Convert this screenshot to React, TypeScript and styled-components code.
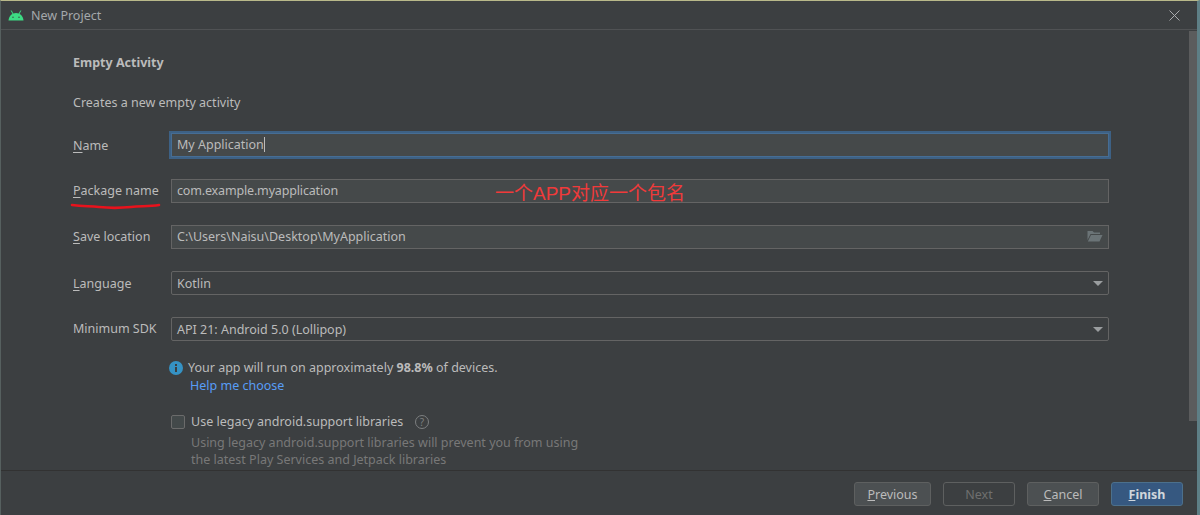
import React from "react";
import styled, { createGlobalStyle } from "styled-components";

const GlobalStyle = createGlobalStyle`
  html, body { margin: 0; padding: 0; background: #3c3f41; }
  body { font-family: "Noto Sans", "Open Sans", sans-serif; font-size: 12.5px; color: #bbbbbb; }
`;

const Window = styled.div`
  position: relative;
  width: 1200px;
  height: 515px;
  box-sizing: border-box;
  display: flex;
  flex-direction: column;
  overflow: hidden;
  background: #3c3f41;
  border-top: 1px solid #b9b98a;
  border-left: 1px solid #56605f;
  border-right: 3px solid #5e7f86;
`;

const TitleBar = styled.div`
  height: 28px;
  flex: none;
  display: flex;
  align-items: center;
  padding: 0 17px 0 7px;
  gap: 7px;
  border-bottom: 1px solid #505254;
  color: #a4a8ab;
  font-size: 12.5px;
`;

const TitleText = styled.span`
  flex: 1;
`;

const Body = styled.div`
  flex: 1;
  display: flex;
  min-height: 0;
`;

const Content = styled.div`
  flex: 1;
  padding: 24px 0 0 72px;
  min-width: 0;
`;

const Heading = styled.div`
  font-weight: 700;
  height: 17px;
  line-height: 17px;
`;

const Description = styled.div`
  margin-top: 23px;
  height: 17px;
  line-height: 17px;
  margin-bottom: 22px;
`;

const Row = styled.div`
  display: flex;
  align-items: center;
  height: 24px;
  margin-bottom: 22px;
`;

const Label = styled.label<{ $raised?: boolean }>`
  width: 98px;
  flex: none;
  padding-bottom: ${(p) => (p.$raised ? "2px" : "0")};
  u { text-underline-offset: 2px; }
`;

const Field = styled.div<{ $focused?: boolean; $rounded?: boolean }>`
  width: 938px;
  height: 24px;
  box-sizing: border-box;
  display: flex;
  align-items: center;
  justify-content: space-between;
  padding: 0 5px ${(p) => (p.$rounded ? "0" : "2px")};
  background: ${(p) => (p.$rounded ? "#3c3f41" : "#45494a")};
  border: 1px solid #646464;
  border-radius: ${(p) => (p.$rounded ? "2px" : "0")};
  color: #bbbbbb;
  ${(p) =>
    p.$focused &&
    `
    outline: 2px solid #3d6185;
    outline-offset: 0;
    border-color: #466d94;
  `}
`;

const PackageValue = styled.span`
  letter-spacing: -0.16px;
`;

const Caret = styled.span`
  display: inline-block;
  width: 1px;
  height: 15px;
  vertical-align: -3px;
  background: #bbbbbb;
`;

const Arrow = styled.span`
  width: 0;
  height: 0;
  border-left: 5px solid transparent;
  border-right: 5px solid transparent;
  border-top: 5px solid #9a9d9f;
`;

const InfoRow = styled.div`
  margin: -4px 0 0 96px;
  display: flex;
  align-items: center;
  gap: 5px;
  height: 17px;
  line-height: 17px;
`;

const HelpLink = styled.a`
  display: block;
  margin: 1px 0 0 117px;
  height: 17px;
  line-height: 17px;
  color: #589df6;
`;

const CheckRow = styled.div`
  margin: 19px 0 0 98px;
  display: flex;
  align-items: center;
  height: 17px;
  line-height: 17px;
`;

const CheckBox = styled.span`
  width: 12px;
  height: 12px;
  flex: none;
  margin-right: 6px;
  background: #43494a;
  border: 1px solid #6b6b6b;
  border-radius: 2px;
`;

const HelpIcon = styled.svg`
  margin-left: 12px;
`;

const Hint = styled.div`
  margin: 4px 0 0 118px;
  line-height: 17px;
  color: #787878;
`;

const ScrollBar = styled.div`
  width: 8px;
  flex: none;
  margin: 1px 0 49px 0;
  background: #5b5c5d;
`;

const Footer = styled.div`
  height: 45px;
  box-sizing: border-box;
  flex: none;
  display: flex;
  justify-content: flex-end;
  align-items: flex-start;
  gap: 12px;
  padding: 11px 14px 0 0;
  border-top: 1px solid #323232;
`;

const Button = styled.button<{ $primary?: boolean; $width: number }>`
  width: ${(p) => p.$width}px;
  height: 24px;
  padding: 0;
  box-sizing: border-box;
  font: inherit;
  font-weight: ${(p) => (p.$primary ? 700 : 400)};
  color: ${(p) => (p.$primary ? "#d0d6dc" : p.disabled ? "#6f6f6f" : "#bbbbbb")};
  background: ${(p) => (p.$primary ? "#365880" : p.disabled ? "#3c3f41" : "#4c5052")};
  border: 1px solid ${(p) => (p.$primary ? "#4c708c" : "#5e6060")};
  border-radius: 3px;
`;

const RedNote = styled.span`
  position: absolute;
  left: 494px;
  top: 181px;
  color: #f03a3a;
  font-family: "Liberation Sans", "Noto Sans CJK SC", sans-serif;
  font-size: 19px;
  line-height: 24px;
`;

const RedStroke = styled.svg`
  position: absolute;
  left: 68px;
  top: 201px;
`;

const AndroidLogo = () => (
  <svg width="16" height="11" viewBox="0 0 16 11">
    <path d="M0.5 10.5 C0.8 6 4 3 8 3 C12 3 15.2 6 15.5 10.5 Z" fill="#3ddc84" />
    <path d="M3.2 0.5 L5 4 M12.8 0.5 L11 4" stroke="#3ddc84" strokeWidth="1" fill="none" />
    <circle cx="5" cy="7.2" r="0.7" fill="#3c3f41" />
    <circle cx="11" cy="7.2" r="0.7" fill="#3c3f41" />
  </svg>
);

const CloseIcon = () => (
  <svg width="11" height="11" viewBox="0 0 11 11">
    <path d="M0.5 0.5 L10.5 10.5 M10.5 0.5 L0.5 10.5" stroke="#a9abad" strokeWidth="1" fill="none" />
  </svg>
);

const FolderIcon = () => (
  <svg width="16" height="12" viewBox="0 0 16 12">
    <path d="M0.5 1 H5.5 L7 2.5 H13 V4 H3.5 L0.5 10 Z" fill="#6b7477" />
    <path d="M4 5 H15.5 L12.5 11.5 H0.8 Z" fill="#6b7477" />
  </svg>
);

const InfoIcon = () => (
  <svg width="14" height="14" viewBox="0 0 14 14">
    <circle cx="7" cy="7" r="7" fill="#3592c4" />
    <rect x="6" y="3" width="2" height="2" fill="#3c3f41" />
    <rect x="6" y="6" width="2" height="5" fill="#3c3f41" />
  </svg>
);

const App = () => {
  return (
    <>
      <GlobalStyle />
      <Window>
        <TitleBar>
          <AndroidLogo />
          <TitleText>New Project</TitleText>
          <CloseIcon />
        </TitleBar>
        <Body>
          <Content>
            <Heading>Empty Activity</Heading>
            <Description>Creates a new empty activity</Description>
            <Row>
              <Label><u>N</u>ame</Label>
              <Field $focused>
                <span>My Application<Caret /></span>
              </Field>
            </Row>
            <Row>
              <Label $raised><u>P</u>ackage name</Label>
              <Field><PackageValue>com.example.myapplication</PackageValue></Field>
            </Row>
            <Row>
              <Label $raised><u>S</u>ave location</Label>
              <Field>
                C:\Users\Naisu\Desktop\MyApplication
                <FolderIcon />
              </Field>
            </Row>
            <Row>
              <Label><u>L</u>anguage</Label>
              <Field $rounded>
                Kotlin
                <Arrow />
              </Field>
            </Row>
            <Row>
              <Label $raised>Minimum SDK</Label>
              <Field $rounded>
                API 21: Android 5.0 (Lollipop)
                <Arrow />
              </Field>
            </Row>
            <InfoRow>
              <InfoIcon />
              <span>Your app will run on approximately <b>98.8%</b> of devices.</span>
            </InfoRow>
            <HelpLink>Help me choose</HelpLink>
            <CheckRow>
              <CheckBox />
              <span>Use legacy android.support libraries</span>
              <HelpIcon width="14" height="14" viewBox="0 0 14 14">
                <circle cx="7" cy="7" r="6.5" fill="none" stroke="#7d7f80" />
                <text x="7" y="10.5" textAnchor="middle" fontSize="10" fill="#7d7f80">?</text>
              </HelpIcon>
            </CheckRow>
            <Hint>
              Using legacy android.support libraries will prevent you from using
              <br />
              the latest Play Services and Jetpack libraries
            </Hint>
          </Content>
          <ScrollBar />
        </Body>
        <Footer>
          <Button $width={77}><u>P</u>revious</Button>
          <Button $width={72} disabled>Next</Button>
          <Button $width={72}><u>C</u>ancel</Button>
          <Button $width={72} $primary><u>F</u>inish</Button>
        </Footer>
        <RedNote>一个APP对应一个包名</RedNote>
        <RedStroke width="94" height="10" viewBox="0 0 94 10">
          <path d="M3 3 C14 4.5 20 4 30 5 C44 6.5 52 6 62 5 C72 4 80 4.5 90 3" stroke="#e8121c" strokeWidth="2.6" fill="none" strokeLinecap="round" />
        </RedStroke>
      </Window>
    </>
  );
};

export default App;
